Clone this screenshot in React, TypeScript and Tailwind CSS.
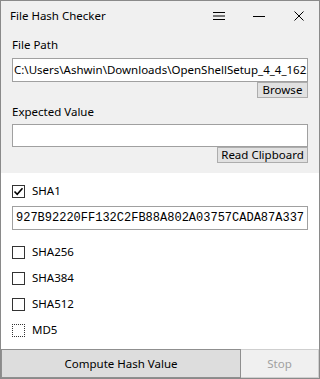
import React from "react";

const ui = { fontFamily: '"Noto Sans", "Liberation Sans", sans-serif' };

function CheckBox({ label, checked, focused }: { label: string; checked?: boolean; focused?: boolean }) {
  return (
    <div className="flex h-[26px] items-center gap-[7px]">
      <div
        className={
          "flex h-[13px] w-[13px] items-center justify-center bg-white " +
          (focused ? "border border-dotted border-[#333333]" : "border border-[#333333]")
        }
      >
        {checked && (
          <svg width="11" height="11" viewBox="0 0 11 11">
            <path d="M1.5 5.5 L4.2 8.3 L9.5 2.3" fill="none" stroke="#000" strokeWidth="1.6" />
          </svg>
        )}
      </div>
      <span className="text-[11.5px] leading-none text-black">{label}</span>
    </div>
  );
}

export default function App() {
  return (
    <div
      style={ui}
      className="flex h-[379px] w-[320px] flex-col overflow-hidden border border-[#8a8a8a] bg-white"
    >
      {/* title bar */}
      <div className="flex h-[30px] shrink-0 items-center bg-[#f0f0f0]">
        <span className="flex-1 pl-[9px] text-[11.5px] text-black">File Hash Checker</span>
        <div className="flex h-full w-[40px] items-center justify-center">
          <svg width="12" height="10" viewBox="0 0 12 10">
            <path d="M0 1.5 H12 M0 5 H12 M0 8.5 H12" stroke="#000" strokeWidth="1" />
          </svg>
        </div>
        <div className="flex h-full w-[40px] items-center justify-center">
          <svg width="12" height="10" viewBox="0 0 12 10">
            <path d="M0 5.5 H12" stroke="#000" strokeWidth="1" />
          </svg>
        </div>
        <div className="flex h-full w-[40px] items-center justify-center">
          <svg width="10" height="10" viewBox="0 0 10 10">
            <path d="M0.5 0.5 L9.5 9.5 M9.5 0.5 L0.5 9.5" stroke="#000" strokeWidth="1" />
          </svg>
        </div>
      </div>

      {/* input panel */}
      <div className="flex h-[142px] shrink-0 flex-col bg-[#f0f0f0] px-[11px] pt-[6px]">
        <div className="h-[16px] text-[11.5px] leading-[16px] text-black">File Path</div>
        <div className="mt-[5px] flex h-[24px] items-center overflow-hidden whitespace-nowrap border border-[#a0a0a0] bg-white px-[1px] text-[11.5px] text-black">
          C:\Users\Ashwin\Downloads\OpenShellSetup_4_4_162.exe
        </div>
        <button className="flex h-[16px] w-[51px] items-center justify-center self-end border border-[#adadad] bg-[#e1e1e1] text-[11.5px] leading-none text-black">
          Browse
        </button>
        <div className="mt-[6px] h-[16px] text-[11.5px] leading-[16px] text-black">Expected Value</div>
        <div className="mt-[4px] h-[23px] border border-[#a0a0a0] bg-white" />
        <button className="flex h-[16px] w-[91px] items-center justify-center self-end whitespace-nowrap border border-[#adadad] bg-[#e1e1e1] text-[11.5px] leading-none text-black">
          Read Clipboard
        </button>
      </div>

      {/* hash list */}
      <div className="flex flex-1 flex-col px-[11px] pt-[5px]">
        <CheckBox label="SHA1" checked />
        <div
          style={{ fontFamily: '"Liberation Mono", monospace' }}
          className="mt-[2px] flex h-[24px] items-center overflow-hidden whitespace-nowrap border border-[#a0a0a0] bg-white px-[3px] text-[12px] text-black"
        >
          927B92220FF132C2FB88A802A03757CADA87A337
        </div>
        <div className="mt-[9px] flex flex-col">
          <CheckBox label="SHA256" />
          <CheckBox label="SHA384" />
          <CheckBox label="SHA512" />
          <CheckBox label="MD5" focused />
        </div>
      </div>

      {/* actions */}
      <div className="flex h-[29px] shrink-0">
        <button className="flex w-[240px] items-center justify-center border border-[#8f8f8f] bg-[#dddddd] text-[11.5px] text-black">
          Compute Hash Value
        </button>
        <button className="flex flex-1 items-center justify-center border border-l-0 border-[#cfcfcf] bg-[#f0f0f0] text-[11.5px] text-[#a0a0a0]">
          Stop
        </button>
      </div>
    </div>
  );
}
